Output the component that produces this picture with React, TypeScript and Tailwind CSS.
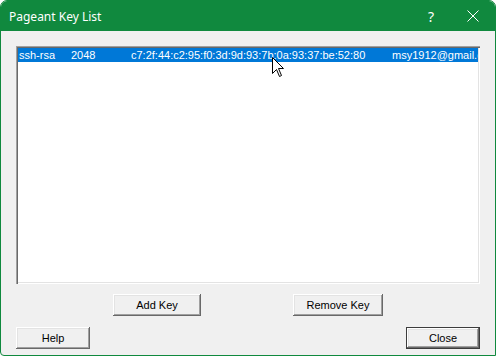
import React from "react";

const btn =
  "h-[22px] flex items-center justify-center bg-[#f0f0f0] text-[11px] text-black shadow-[inset_-1px_-1px_#696969,inset_1px_1px_#ffffff,inset_-2px_-2px_#a0a0a0,inset_2px_2px_#e3e3e3]";

export default function App() {
  return (
    <div
      className="w-[497px] h-[357px] bg-white relative overflow-hidden"
      style={{ fontFamily: '"Liberation Sans", Arial, sans-serif' }}
    >
      <div className="w-[496px] h-[356px] border border-[#10893e] rounded-tl-[7px] rounded-tr-[7px] rounded-bl-[4px] flex flex-col overflow-hidden bg-[#f0f0f0]">
        <div className="h-[30px] bg-[#10893e] flex items-center text-white shrink-0">
          <span
            className="ml-[8px] text-[12px] mt-[1px]"
            style={{ fontFamily: '"Noto Sans", "Open Sans", sans-serif' }}
          >
            Pageant Key List
          </span>
          <span
            className="ml-auto mr-[33px] text-[14px] leading-none mt-[1px]"
            style={{ fontFamily: '"Noto Sans", sans-serif' }}
          >
            ?
          </span>
          <svg width="12" height="12" viewBox="0 0 12 12" className="mr-[16px]">
            <path d="M0.5 0.5 L11.5 11.5 M11.5 0.5 L0.5 11.5" stroke="white" strokeWidth="1" />
          </svg>
        </div>
        <div className="flex-1 flex flex-col px-[15px] pt-[15px] pb-[6px]">
          <div className="h-[238px] bg-white p-[2px] shadow-[inset_1px_1px_#a0a0a0,inset_2px_2px_#696969,inset_-1px_-1px_#ffffff,inset_-2px_-2px_#e3e3e3]">
            <div className="h-full overflow-hidden relative">
              <div className="h-[14px] bg-[#0078d7] text-white text-[11px] leading-[14px] relative whitespace-nowrap">
                <span className="absolute left-[1px]">ssh-rsa</span>
                <span className="absolute left-[53px]">2048</span>
                <span className="absolute left-[113px]">
                  c7:2f:44:c2:95:f0:3d:9d:93:7b:0a:93:37:be:52:80
                </span>
                <span className="absolute left-[374px]">msy1912@gmail.com</span>
              </div>
            </div>
          </div>
          <div className="flex justify-center gap-[92px] mt-[10px]">
            <div className={btn + " w-[88px]"}>Add Key</div>
            <div className={btn + " w-[90px]"}>Remove Key</div>
          </div>
          <div className="flex justify-between mt-[11px]">
            <div className={btn + " w-[74px]"}>Help</div>
            <div className="w-[74px] h-[22px] border border-[#3c3c3c]">
              <div className={btn + " w-full h-full"}>Close</div>
            </div>
          </div>
        </div>
      </div>
      <svg
        width="13"
        height="21"
        viewBox="0 0 13 21"
        className="absolute left-[272px] top-[57px]"
      >
        <path
          d="M0.5 0.5 L0.5 16.5 L4.5 12.5 L7.5 19.5 L9.5 18.5 L6.5 11.5 L11.5 11.5 Z"
          fill="white"
          stroke="black"
          strokeWidth="1"
          strokeLinejoin="miter"
        />
      </svg>
    </div>
  );
}
